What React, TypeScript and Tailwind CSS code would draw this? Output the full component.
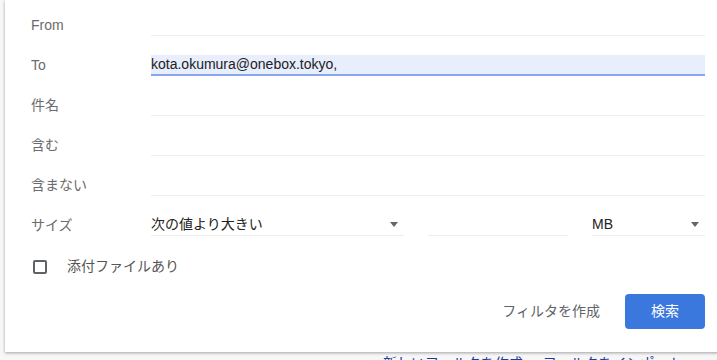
import type { ReactNode } from "react";

const font = "font-['Liberation_Sans','Noto_Sans_CJK_JP',sans-serif]";

function Row({ label, children }: { label: string; children: ReactNode }) {
  return (
    <div className="flex h-10 items-center">
      <div className="w-[120px] shrink-0 text-[14px] text-[#6b6b6b]">{label}</div>
      <div className="flex flex-1 items-center">{children}</div>
    </div>
  );
}

function Field() {
  return <div className="h-[21px] flex-1 border-b border-[#eeeeee]" />;
}

function Arrow() {
  return (
    <span className="h-0 w-0 border-x-[4px] border-t-[5px] border-x-transparent border-t-[#666]" />
  );
}

function Select({ value, className }: { value: string; className: string }) {
  return (
    <div
      className={`flex h-[21px] items-center justify-between border-b border-[#eeeeee] pr-[6px] text-[14px] text-[#222] ${className}`}
    >
      <span>{value}</span>
      <Arrow />
    </div>
  );
}

export default function App() {
  return (
    <div className={`h-[360px] w-[717px] overflow-hidden bg-[#f7f7f7] ${font}`}>
      <div className="ml-[5px] flex h-[352px] w-[730px] flex-col bg-white pl-[26px] pr-[30px] pt-[5px] shadow-[0_1px_3px_rgba(0,0,0,0.35)]">
        <Row label="From">
          <Field />
        </Row>
        <Row label="To">
          <div className="flex h-[21px] flex-1 items-center border-b-2 border-[#86a6ee] bg-[#e8eefc] text-[14px] text-[#202124]">
            kota.okumura@onebox.tokyo,
          </div>
        </Row>
        <Row label="件名">
          <Field />
        </Row>
        <Row label="含む">
          <Field />
        </Row>
        <Row label="含まない">
          <Field />
        </Row>
        <Row label="サイズ">
          <Select value="次の値より大きい" className="w-[253px]" />
          <div className="ml-[24px] h-[21px] w-[140px] border-b border-[#eeeeee]" />
          <Select value="MB" className="ml-[24px] flex-1" />
        </Row>
        <div className="flex h-10 items-center pt-[3px]">
          <span className="ml-[2px] h-[14px] w-[14px] rounded-[2px] border-2 border-[#5f6368]" />
          <span className="ml-[20px] text-[14px] text-[#555]">添付ファイルあり</span>
        </div>
        <div className="mt-[9px] flex items-center justify-end gap-[9px]">
          <button className="h-[35px] px-4 text-[14px] text-[#5f6368]">フィルタを作成</button>
          <button className="h-[35px] w-[80px] rounded-[4px] bg-[#3b78de] text-[14px] text-white">
            検索
          </button>
        </div>
      </div>
      <div className="ml-[383px] mt-[1px] flex gap-[20px] text-[14px] leading-5 text-[#1a3da0]">
        <span>新しいフィルタを作成</span>
        <span>フィルタをインポート</span>
      </div>
    </div>
  );
}
